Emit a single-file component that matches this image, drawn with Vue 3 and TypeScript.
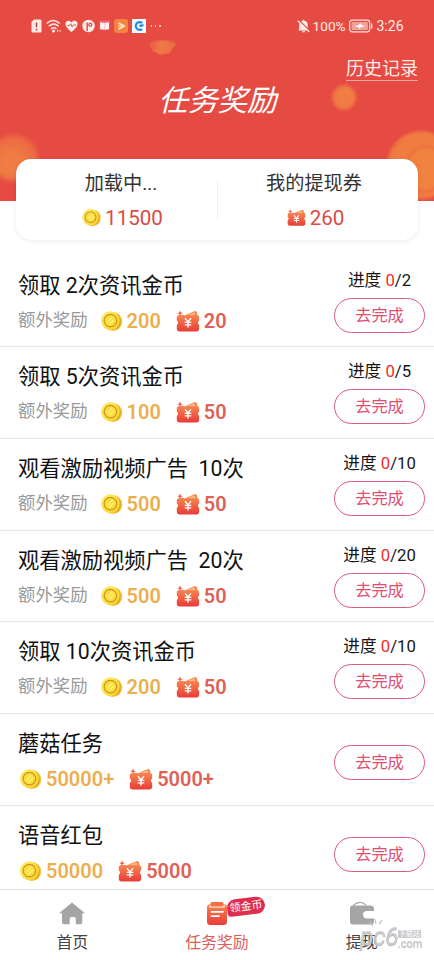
<script setup lang="ts">
interface Task {
  title: string
  coins: string
  tickets: string
  total?: number
}

const tasks: Task[] = [
  { title: '领取 2次资讯金币', coins: '200', tickets: '20', total: 2 },
  { title: '领取 5次资讯金币', coins: '100', tickets: '50', total: 5 },
  { title: '观看激励视频广告  10次', coins: '500', tickets: '50', total: 10 },
  { title: '观看激励视频广告  20次', coins: '500', tickets: '50', total: 20 },
  { title: '领取 10次资讯金币', coins: '200', tickets: '50', total: 10 },
  { title: '蘑菇任务', coins: '50000+', tickets: '5000+' },
  { title: '语音红包', coins: '50000', tickets: '5000' },
]
</script>

<template>
  <div class="screen">
    <svg class="defs" width="0" height="0" aria-hidden="true">
      <defs>
        <linearGradient id="ticketFill" x1="0" y1="0" x2="0" y2="1">
          <stop offset="0" stop-color="#f78650" />
          <stop offset="1" stop-color="#e93c3a" />
        </linearGradient>
        <linearGradient id="coinFill" x1="0" y1="0" x2="1" y2="1">
          <stop offset="0" stop-color="#fff06a" />
          <stop offset="1" stop-color="#f9cf26" />
        </linearGradient>
        <symbol id="coin" viewBox="0 0 22 22">
          <circle cx="12.2" cy="11.500" r="9.6" fill="#f3c637" />
          <path d="M14 2.500a9.600 9.600 0 0 1 0 18q4-3.500 4-9t-4-9z" fill="#dfa325" />
          <circle cx="9.900" cy="10.600" r="9.400" fill="url(#coinFill)" />
          <circle cx="9.900" cy="10.600" r="6.300" fill="#fbdc3a" stroke="#c99520" stroke-width="1.200" />
          <path d="M6.800 12.500l5-5.400M9 14.600l4.600-5" stroke="#fff07a" stroke-width="1.500" />
        </symbol>
        <symbol id="ticket" viewBox="0 0 24 22">
          <path d="M6 6.500l13-5.400 1.800.6 1 5z" fill="#f08a4f" />
          <path d="M10 5.500l8.500-3.300 1 3.300z" fill="#fdb888" />
          <path d="M4 .6l.9 1.900 1.900.7-1.900.9L4 6l-.8-1.900-1.900-.9 1.900-.7z" fill="#ef6042" />
          <path d="M3.600 5h4.200q2 2 4.200 0h8.400q2.800 0 2.800 2.600v2.900q-2.600 2.200 0 4.400v3.600q0 2.900-2.900 2.900H3.700q-2.900 0-2.900-2.900v-3.600q2.600-2.200 0-4.400V7.600q0-2.600 2.800-2.600z" fill="url(#ticketFill)" />
          <path d="M9 8.300l3 3.700 3-3.700M12 12v5.500M8.700 12.300h6.600M8.700 14.900h6.600" fill="none" stroke="#fff" stroke-width="1.350" />
        </symbol>
      </defs>
    </svg>

    <header class="hero">
      <i class="blob blob-top"></i>
      <i class="blob blob-mid"></i>
      <i class="blob blob-left"></i>
      <i class="blob blob-right"></i>

      <div class="status">
        <div class="status-left">
          <svg width="11" height="14" viewBox="0 0 11 14"><path d="M3 .5h6q1.500 0 1.500 1.500v10q0 1.500-1.500 1.500H2Q.5 13.500.5 12V3z" fill="#fdeae6" /><path d="M5.500 3.500v4.700M5.500 9.700v1.700" stroke="#b7413b" stroke-width="1.500" /></svg>
          <svg width="15" height="14" viewBox="0 0 15 14" fill="none" stroke="#fde3df" stroke-width="1.500"><path d="M.7 4.500q6.500-6 13 0M2.800 7.200q4.900-4.200 9.800 0M5 9.800q2.700-2.200 5.400 0" /><circle cx="7.500" cy="12" r=".8" /><path d="M11.500 10.500v2.500M14 11v2" stroke-width="1" /></svg>
          <svg width="13" height="14" viewBox="0 0 13 14"><path d="M6.500 13C3 10 .5 8 .5 5 .5 1.500 4.500.7 6.500 3.400 8.500.7 12.500 1.500 12.500 5c0 3-2.500 5-6 8z" fill="#fdeeea" /><path d="M2.500 6.500h2l1.200-1.700 1.500 3L8.500 6H11" fill="none" stroke="#d9544c" /></svg>
          <svg width="13" height="14" viewBox="0 0 13 14"><circle cx="6.500" cy="7" r="6.200" fill="#fdeeea" /><path d="M5.200 12V3.500" stroke="#df514a" stroke-width="1.500" /><circle cx="8.300" cy="5.700" r="1.500" fill="none" stroke="#df514a" stroke-width="1.300" /></svg>
          <svg width="11" height="14" viewBox="0 0 11 14"><path d="M.5 1l1.700 1L4 1l1.500 1L7 1l1.700 1 1.800-1v9.500H.5z" fill="#f56578" /><path d="M1 3.200l4.400.8v6.800L1 10.200zM10 3.200L5.600 4v6.800l4.400-.6z" fill="#fff0f2" /></svg>
          <svg width="14" height="14" viewBox="0 0 14 14"><rect width="14" height="14" rx="3" fill="#f5823e" /><path d="M4.500 4l5.500 3-5.500 3.200" fill="none" stroke="#ffebd2" stroke-width="1.700" /><path d="M4 7h3" stroke="#ffebd2" /></svg>
          <svg width="14" height="14" viewBox="0 0 14 14"><rect width="14" height="14" fill="#f5fbff" /><path d="M11.300 3.500A5 5 0 1 0 11 10.800L8.700 9.300A2.600 2.600 0 1 1 8.800 4.800z" fill="#238cdd" /><path d="M7 6.300q2.500-1.800 5.200-.6-1 2.500-4.200 2.300z" fill="#238cdd" /></svg>
          <span class="dots"><i></i><i></i><i></i></span>
        </div>
        <div class="status-right">
          <svg class="bell" width="13" height="14" viewBox="0 0 13 14"><path d="M2.200 10.200V6q0-3.800 3.500-4.200V.8h1.500v1Q10.700 2.200 10.700 6v4.200l1 1.300H1.200zM5 12.200h3v1H5z" fill="#fdece8" /><path d="M1.500 1l11.500 11" stroke="#e64b43" stroke-width="1.500" /><path d="M.8 1.800l11.400 11" stroke="#fdece8" stroke-width="1.200" /></svg>
          <span class="percent">100%</span>
          <svg width="24" height="14" viewBox="0 0 24 14"><rect x=".7" y="1.200" width="20" height="11.600" rx="2.500" fill="none" stroke="#fce1dd" stroke-width="1.200" /><rect x="2.500" y="3" width="16.400" height="8" rx="1" fill="#f4a09a" /><path d="M5.500 7.500L10 6l1-1.700 2 2L16 7l-4.500 1.400-1 1.500-1.500-2z" fill="#fff" /><path d="M22.600 4.500v5" stroke="#fce1dd" stroke-width="1.400" /></svg>
          <span>3:26</span>
        </div>
      </div>
      <div class="history-row"><a class="history">历史记录</a></div>
      <h1>任务奖励</h1>
    </header>

    <section class="card">
      <div class="balance">
        <span class="balance-label">加载中...</span>
        <div class="balance-value"><svg class="balance-icon"><use href="#coin" /></svg><span>11500</span></div>
      </div>
      <i class="card-split"></i>
      <div class="balance">
        <span class="balance-label">我的提现券</span>
        <div class="balance-value"><svg class="balance-icon"><use href="#ticket" /></svg><span>260</span></div>
      </div>
    </section>

    <main class="tasks">
      <article v-for="task in tasks" :key="task.title" class="task">
        <div class="task-main">
          <h2>{{ task.title }}</h2>
          <div class="rewards">
            <span v-if="task.total" class="extra">额外奖励</span>
            <svg class="coin-icon"><use href="#coin" /></svg>
            <b class="coins">{{ task.coins }}</b>
            <svg class="ticket-icon"><use href="#ticket" /></svg>
            <b class="tickets">{{ task.tickets }}</b>
          </div>
        </div>
        <div class="action" :class="{ single: !task.total }">
          <p v-if="task.total" class="progress">进度 <em>0</em>/{{ task.total }}</p>
          <button type="button">去完成</button>
        </div>
      </article>
    </main>

    <nav class="tabs">
      <div class="tab">
        <svg width="28" height="25" viewBox="0 0 28 25"><path d="M14 1.500L27 12.300h-2.700v9q0 2-2 2h-4.500v-5.500q0-1.800-1.800-1.800h-2.500q-1.800 0-1.800 1.800v5.500H6q-2 0-2-2v-9H1z" fill="#a5a5a5" /></svg>
        <span>首页</span>
      </div>
      <div class="tab active">
        <svg width="22" height="25" viewBox="0 0 22 25"><rect x="1" y="3" width="20" height="21" rx="3.500" fill="url(#ticketFill)" /><path d="M4 3.500V6h14V3.500" fill="none" stroke="#fff" stroke-width="1.100" /><rect x="4.500" y="1" width="13" height="4.200" rx="1.500" fill="#f27149" /><path d="M5.500 10.800h11.500M5.500 15.200h7.500" stroke="#fff" stroke-width="1.800" stroke-linecap="round" /></svg>
        <span>任务奖励</span>
        <span class="badge">领金币</span>
      </div>
      <div class="tab">
        <svg width="26" height="25" viewBox="0 0 26 25"><path d="M4 4.500Q11-1.500 17 4" fill="none" stroke="#a5a5a5" stroke-width="1.200" /><path d="M3.500 4.500h18Q25 4.500 25 8v2h-7q-4 .3-4 3.700t4 3.800h7V20q0 3.500-3.500 3.500h-18Q1 23.500 1 20.500v-13q0-3 2.500-3z" fill="#a5a5a5" /></svg>
        <span>提现</span>
      </div>
      <div class="watermark">
        <span class="wm-name">pc6</span>
        <span class="wm-side"><small>下载站</small><span>.com</span></span>
        <svg class="wm-rays" width="14" height="8" viewBox="0 0 14 8"><path d="M1 3l3 4M6 0l1 5M13 1l-3 4" stroke="#bfc0c4" stroke-width="1.300" /></svg>
      </div>
    </nav>
  </div>
</template>

<style>
body {
  background: #fff;
}
</style>

<style scoped>
.screen {
  width: 434px;
  height: 960px;
  display: flex;
  flex-direction: column;
  overflow: hidden;
  background: #fff;
  color: #161616;
  font-family: Roboto, "Noto Sans CJK SC", sans-serif;
}
.defs { position: absolute; }
h1, h2, p { margin: 0; font-weight: 400; }
svg { flex: none; }
.hero {
  position: relative;
  flex: none;
  height: 200.500px;
  box-sizing: border-box;
  padding-top: 16px;
  background: #e64b43;
  overflow: hidden;
  color: #fdece9;
}
.blob {
  position: absolute;
  border-radius: 50%;
  filter: blur(1.500px);
}
.blob-top {
  left: 147px;
  top: 40px;
  width: 31px;
  height: 15px;
  background: linear-gradient(100deg, #e85546, #ef7a45 45%, #ec6945);
  clip-path: polygon(0 0, 100% 0, 88% 45%, 70% 90%, 45% 100%, 18% 75%);
  filter: blur(0.800px);
}
.blob-mid { left: 332px; top: 85px; width: 24px; height: 25px; background: radial-gradient(circle at 55% 50%, #f07e44 40%, #ec6645); }
.blob-left {
  left: -10px;
  top: 135px;
  width: 48px;
  height: 46px;
  background: radial-gradient(circle at 45% 60%, #f07d43 25%, #ec6a44 65%, #e75247 100%);
  filter: blur(2px);
}
.blob-right {
  left: 387px;
  top: 131px;
  width: 68px;
  height: 68px;
  background: radial-gradient(circle at 60% 55%, #f1823f 30%, #f07a43 65%, #e95c46 100%);
}
.blob-right::after {
  content: "";
  position: absolute;
  inset: 14px 10px 6px 18px;
  border: 2px solid #ec6a40;
  border-radius: 50%;
}
.status {
  position: relative;
  display: flex;
  justify-content: space-between;
  height: 20px;
  padding: 0 30.500px;
}
.status-left, .status-right { display: flex; align-items: center; }
.status-left { gap: 4px; }
.status-right { font-size: 14px; line-height: 20px; gap: 3.500px; }
.percent { font-size: 13.600px; }
.bell { margin-right: -1px; }
.dots { display: flex; gap: 2.500px; margin-left: 1px; }
.dots i { width: 1.700px; height: 1.700px; background: #fac2bd; }
.history-row {
  position: relative;
  display: flex;
  justify-content: flex-end;
  padding: 22px 16px 0;
}
.history {
  font-size: 18px;
  line-height: 22px;
  border-bottom: 1px solid #f5a8a3;
}
h1 {
  position: relative;
  padding-left: 1px;
  font-size: 29.600px;
  line-height: 41px;
  text-align: center;
  font-style: italic;
  color: #fff;
}
.card {
  position: relative;
  flex: none;
  display: flex;
  align-items: center;
  height: 81px;
  margin: -41.500px 16px 0;
  border-radius: 15px;
  background: #fff;
  box-shadow: 0 1px 5px rgba(0, 0, 0, 0.08);
}
.balance {
  flex: 1;
  display: flex;
  flex-direction: column;
  align-items: center;
  padding-top: 1px;
}
.balance:first-child { padding-left: 9px; }
.balance:last-child { padding-right: 8px; }
.balance-label { font-size: 19.200px; line-height: 28px; color: #333; }
.balance-value {
  display: flex;
  align-items: center;
  gap: 4px;
  margin: 7px 0 0 3px;
  font-size: 20.600px;
  line-height: 26px;
  color: #db4a44;
}
.balance-icon { width: 19px; height: 19px; }
.card-split { width: 1px; height: 40px; background: #f2f2f2; }
.tasks { flex: none; height: 633.500px; padding-top: 15.500px; overflow: hidden; }
.task {
  box-sizing: border-box;
  display: flex;
  justify-content: space-between;
  height: 91.700px;
  padding: 0 9px 0 18px;
  border-bottom: 1px solid #e6e6e6;
}
.task-main { padding-top: 15px; }
h2 { font-size: 21.250px; line-height: 30px; white-space: pre; color: #111; }
.rewards { display: flex; align-items: center; height: 26px; margin-top: 7px; }
.extra { position: relative; top: -1px; margin-right: 11px; font-size: 17.400px; line-height: 26px; color: #999; }
.coin-icon { width: 23px; height: 22px; margin: 0 4px 0 1px; }
.ticket-icon { width: 24px; height: 22px; margin: 0 4px 0 15px; }
b { font-size: 20px; line-height: 26px; font-weight: 600; }
.coins { color: #ebaf50; }
.tickets { color: #df6157; }
.action {
  width: 91px;
  display: flex;
  flex-direction: column;
  align-items: center;
  padding-top: 14px;
}
.action.single { padding-top: 31.500px; }
.progress { margin-bottom: 6px; font-size: 16.700px; line-height: 22px; white-space: nowrap; }
.progress em { font-style: normal; color: #ee2c2c; }
button {
  box-sizing: border-box;
  width: 91px;
  height: 35px;
  padding: 0;
  border: 1px solid #dc5b7b;
  border-radius: 18px;
  background: #fff;
  color: #df4d73;
  font: inherit;
  font-size: 16.200px;
  line-height: 33px;
}
.tabs {
  position: relative;
  flex: 1;
  display: grid;
  grid-template-columns: repeat(3, 1fr);
  border-top: 1px solid #ddd;
  background: #fff;
}
.tab {
  position: relative;
  display: flex;
  flex-direction: column;
  align-items: center;
  padding-top: 11px;
  font-size: 15.900px;
  line-height: 24px;
  color: #444;
}
.tab > span:not(.badge) { margin-top: 5px; }
.tab.active { color: #e05d57; }
.badge {
  position: absolute;
  left: 82px;
  top: 8px;
  width: 38px;
  height: 17px;
  border-radius: 9px 9px 9px 4px;
  background: #df2d50;
  color: #fff;
  font-size: 11px;
  line-height: 17px;
  text-align: center;
  transform: rotate(-7deg);
}
.watermark {
  position: absolute;
  left: 360px;
  top: 33px;
  display: flex;
  align-items: flex-end;
  color: #c6c7cb;
  opacity: 0.9;
  text-shadow: 0 1px 1px #a5a5a8;
}
.wm-name { font-size: 25px; line-height: 27px; font-style: italic; letter-spacing: -0.700px; }
.wm-side { display: flex; flex-direction: column; padding-bottom: 1px; font-size: 11px; line-height: 11px; }
.wm-side small {
  align-self: flex-start;
  padding: 0 1px;
  font-size: 7px;
  line-height: 8px;
  background: #c7c8cc;
  color: #fff;
  text-shadow: none;
}
.wm-rays { position: absolute; left: 9px; top: -4px; }
</style>
